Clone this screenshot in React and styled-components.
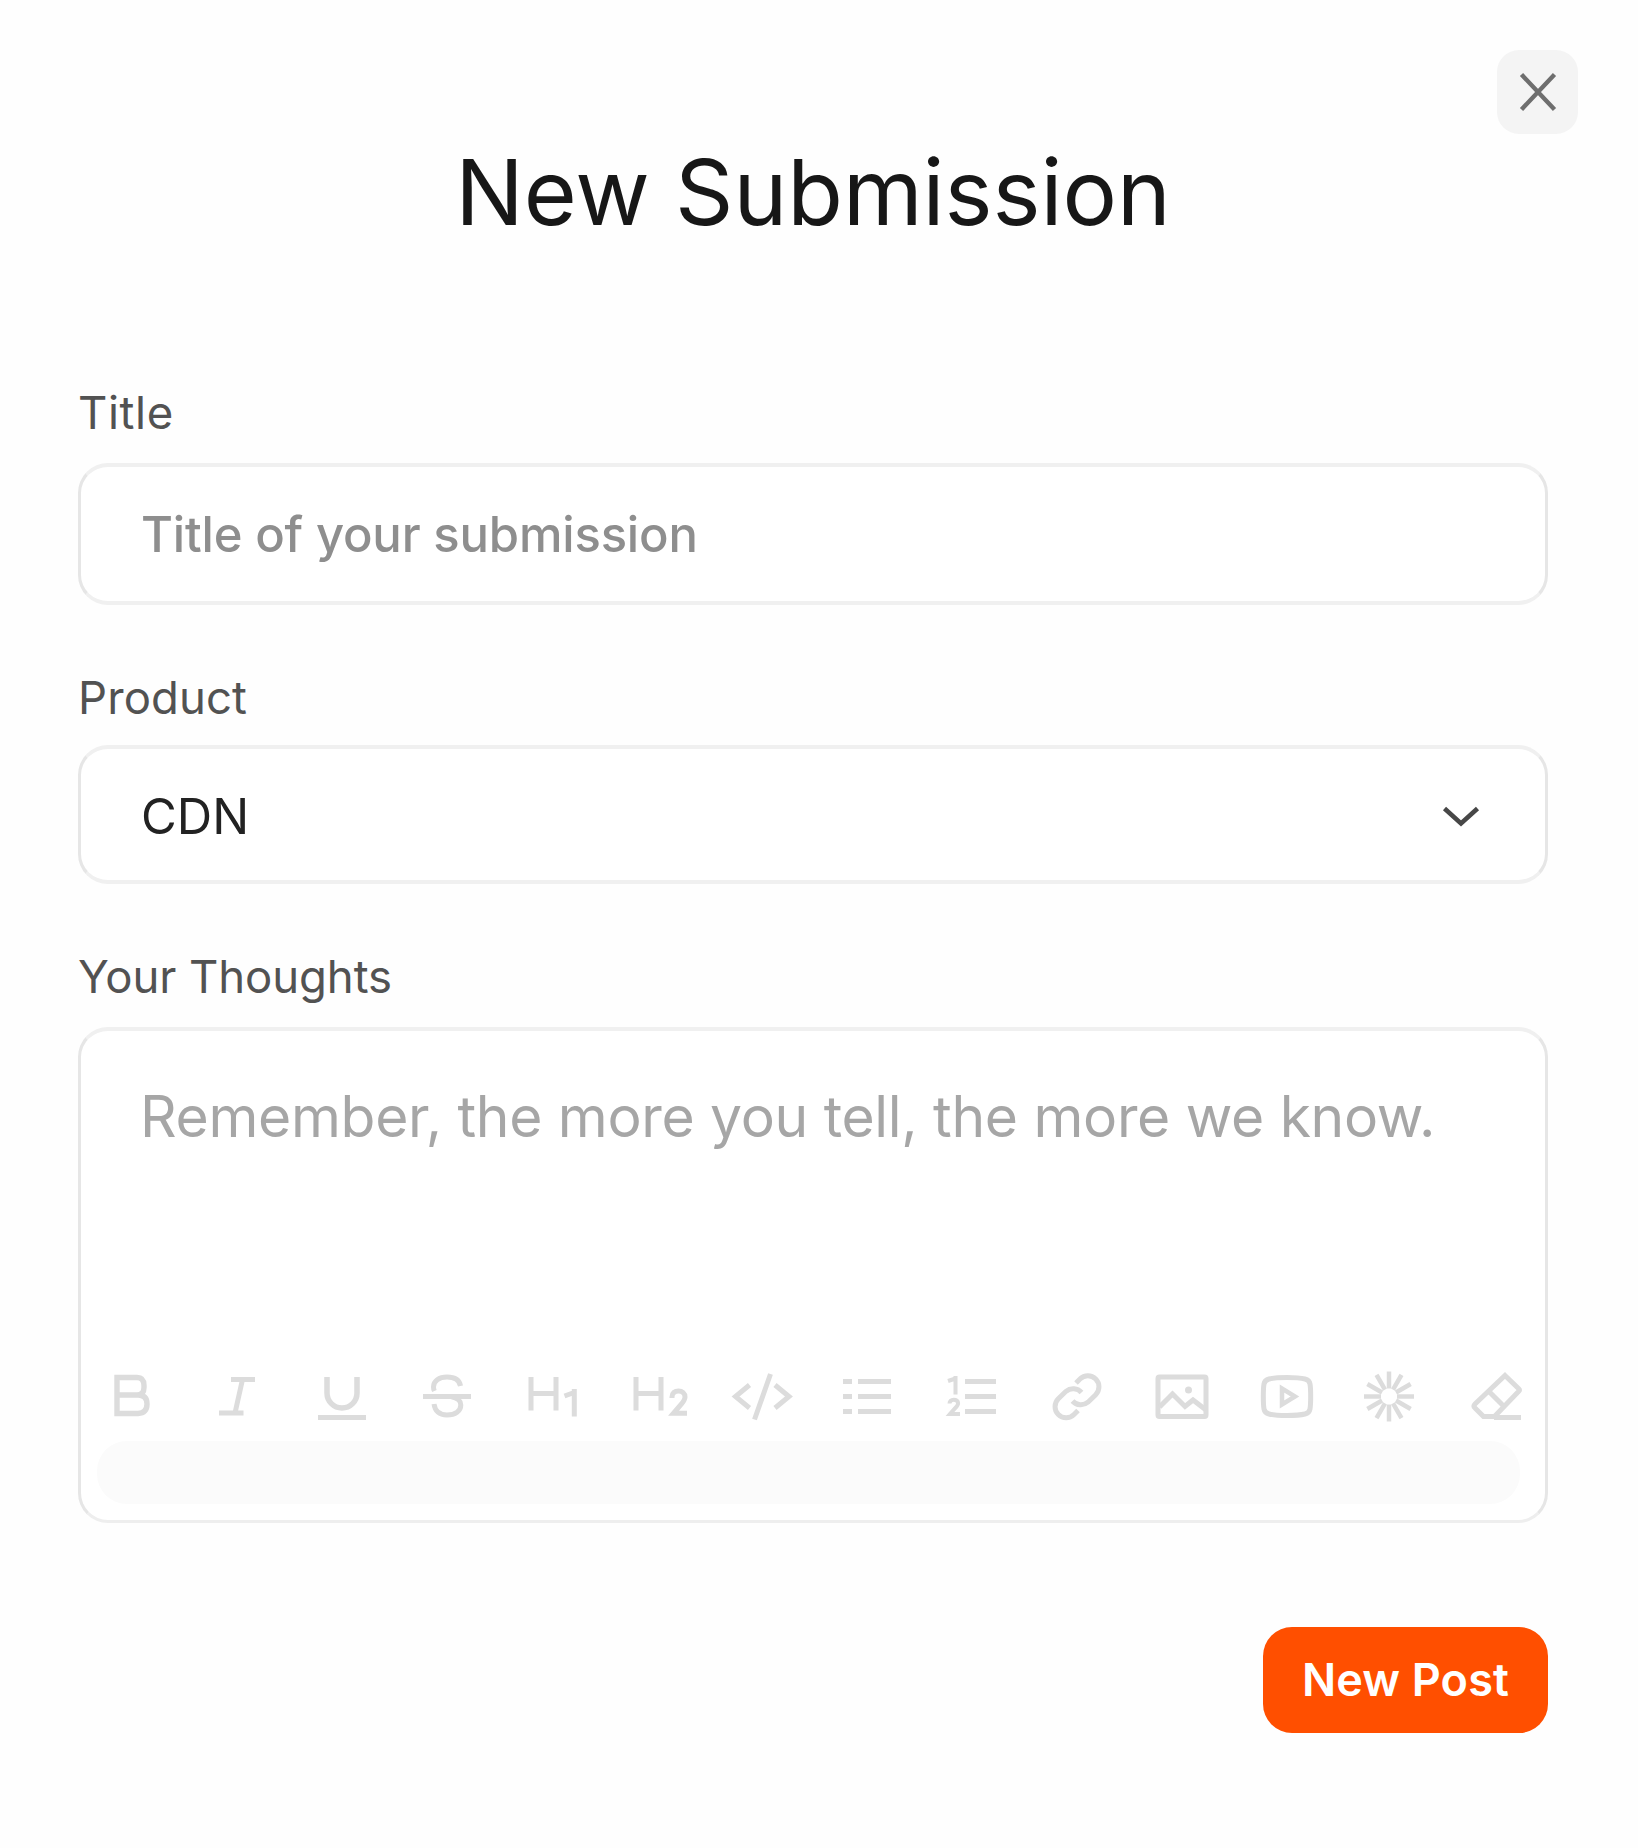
import React from 'react';
import styled, { createGlobalStyle } from 'styled-components';

const GlobalStyle = createGlobalStyle`
  *, *::before, *::after { box-sizing: border-box; }
  body { margin: 0; background: #fefefe; }
`;

const Dialog = styled.main`
  display: flex;
  flex-direction: column;
  width: 1638px;
  height: 1848px;
  padding: 50px 60px 0 78px;
  background: #fefefe;
  font-family: Inter, 'Liberation Sans', sans-serif;
`;

const CloseButton = styled.button`
  display: flex;
  align-items: center;
  justify-content: center;
  align-self: flex-end;
  width: 81px;
  height: 84px;
  padding: 0;
  border: 0;
  border-radius: 22px;
  background: #f4f4f4;
  color: #6e6e6e;
`;

const Form = styled.form`
  display: flex;
  flex-direction: column;
  width: 1470px;
  padding-top: 4px;
`;

const Heading = styled.h1`
  margin: 0 0 140px;
  color: #171717;
  font-size: 91px;
  font-weight: 400;
  line-height: 108px;
  letter-spacing: -0.05px;
  text-align: center;
`;

const Field = styled.div`
  display: flex;
  flex-direction: column;
  gap: ${({ $gap }) => $gap || 23}px;
  margin-bottom: 66px;
`;

const Label = styled.span`
  color: #525252;
  font-size: 45.5px;
  line-height: 54px;
  letter-spacing: ${({ $tracking }) => $tracking || 0}px;
`;

const Box = styled.div`
  display: flex;
  border-style: solid;
  border-width: 4px 3px;
  border-color: #f0f0f0 #e6e6e6;
  border-radius: 30px;
  background: #fff;
`;

const TextInput = styled(Box)`
  align-items: center;
  height: 142px;
  padding: 2px 0 0 60px;
`;

const Select = styled(Box)`
  align-items: center;
  justify-content: space-between;
  height: 139px;
  padding: 4px 66px 0 60px;
`;

const Value = styled.span`
  color: #222;
  font-size: 49px;
  line-height: 60px;
`;

const Placeholder = styled.span`
  color: #8e8e8e;
  font-size: 49px;
  font-weight: 500;
  line-height: 60px;
  letter-spacing: -0.18px;
`;

const Editor = styled(Box)`
  flex-direction: column;
  height: 496px;
  border-width: 4px 3px 3px;
  border-color: #f0f0f0 #e6e6e6 #eee;
`;

const Prompt = styled.span`
  flex: 1;
  padding: 51px 0 0 59px;
  color: #a6a6a6;
  font-size: 57px;
  line-height: 70px;
  letter-spacing: -0.32px;
  white-space: nowrap;
`;

const Toolbar = styled.div`
  display: flex;
  gap: 45px;
  padding-left: 21px;
  color: #dcdcdc;
`;

const Glyph = styled.svg`
  flex: none;
  display: block;
  width: ${({ $w }) => $w || 60}px;
  height: ${({ $h }) => $h || 60}px;
  overflow: visible;
  fill: none;
  stroke: currentColor;
  stroke-width: ${({ $stroke }) => $stroke || 5}px;
`;

const StatusBar = styled.div`
  width: 1423px;
  height: 63px;
  margin: 15px 0 16px 16px;
  border-radius: 30px;
  background: #fbfbfb;
`;

const SubmitButton = styled.button`
  align-self: flex-end;
  width: 285px;
  height: 106px;
  margin-top: 38px;
  padding: 0 0 2px;
  border: 0;
  border-radius: 29px;
  background: #ff4f00;
  color: #fff;
  font-family: inherit;
  font-size: 45px;
  font-weight: 600;
  letter-spacing: 0.15px;
`;

const spokes = Array.from({ length: 12 }, (_, i) => i * 30);

const tools = [
  ['Bold', <path strokeWidth="5.400" d="M15 11.500h20q7 0 7 8v2q0 7.500-7 7.500H15zM15 29h21q9 0 9 9t-9 9.500H15V11" />],
  ['Italic', <path d="M24 13.500h24M12 47h24.500M35.500 13.500L28 47" />],
  ['Underline', <><path strokeWidth="5.500" d="M15 11v16a15 15 0 0 0 30 0V11" /><path d="M6 51.500h48" /></>],
  ['Strikethrough', <path d="M6 30.500h48M43.500 20c-1-6-6-9-13.500-9-8 0-13.500 4-13.500 10 0 1.500.4 3 .9 4M17 38c1 7 5.500 11 13 11 8.500 0 13.800-4 13.800-10 0-5-3.300-7-9.800-8.500" />],
  ['Heading 1', <><path d="M9 11v33.500M34 11v33.500M9 27.500h25" /><path d="M42.500 30l9.700-3.500M52.300 23v27.500" /></>],
  ['Heading 2', <><path d="M9 11v33.500M34 11v33.500M9 27.500h25" /><path d="M45 32v-1c0-4 2.800-6 6.500-6s6.500 2.200 6.500 6c0 2.500-1.500 4.500-3.500 7L46.500 47.300H60" /></>],
  ['Code', <path d="M17.500 19L3.500 30.500l14 11.500M38.500 8L22.500 53.500M43 19l14 11.500L43 42" />],
  ['Bulleted list', <path d="M6 15.500h9M6 30.500h9M6 45.500h9M21 15.500h33M21 30.500h33M21 45.500h33" />],
  ['Numbered list', <><path d="M23 15.500h31M23 30.500h31M23 45.500h31" /><path strokeWidth="4" d="M6 15l7.500-2.500M13.500 10v18.500M7.500 37.500c0-2.300 1.700-3.800 4.200-3.800s4.400 1.400 4.400 3.600c0 2-1.300 3.300-3 4.900L8 48h10" /></>],
  ['Link', <path d="M29 17l4-4a11.100 11.100 0 0 1 15.700 15.700l-7.700 7.500a11.100 11.100 0 0 1-15.500-1.200M31 44.500l-4 4A11.100 11.100 0 0 1 11.300 32.800l7.700-7.500a11.100 11.100 0 0 1 15.500 1.200" />],
  ['Image', <><rect x="6" y="11" width="48" height="39.500" rx="1.500" /><path d="M7.500 41l13-13L33 40.500l8-6.500 13 10" /><circle cx="36.500" cy="24" r="3.500" fill="currentColor" stroke="none" /></>],
  ['Video', <><path d="M30 11.500c8 0 14 .5 18 1.500 3 .8 4.500 2 5 5 .9 5 .9 20 0 25-.5 3-2 4.200-5 5-8 2-28 2-36 0-3-.8-4.500-2-5-5-.9-5-.9-20 0-25 .5-3 2-4.200 5-5 4-1 10-1.500 18-1.500z" /><path strokeWidth="4.500" d="M25 22.500v16L38 30.500z" /></>],
  ['Effects', <g strokeWidth="4.500">{spokes.map((a) => <path key={a} transform={`rotate(${a} 27 30.500)`} d="M27 5.500v17" />)}</g>],
  ['Clear formatting', <path d="M38 9.500L52 23q1 1 0 2L27.500 50.500H16.500L8 42q-2-2 0-4zM21.500 25L36.500 40M27 51.500h27" />],
];

export default function App() {
  return (
    <>
      <GlobalStyle />
      <Dialog>
        <CloseButton type="button" aria-label="Close">
          <Glyph $w={36} $h={36} $stroke={4.4} viewBox="0 0 36 36">
            <path d="M1.500 .500l33 35M34.500 .500L1.500 35.500" />
          </Glyph>
        </CloseButton>
        <Form>
          <Heading>New Submission</Heading>
          <Field>
            <Label $tracking={0.6}>Title</Label>
            <TextInput>
              <Placeholder>Title of your submission</Placeholder>
            </TextInput>
          </Field>
          <Field $gap={20}>
            <Label $tracking={0.1}>Product</Label>
            <Select>
              <Value>CDN</Value>
              <Glyph $w={36} $h={20} $stroke={4.6} viewBox="0 0 36 20" color="#474747">
                <path d="M1.500 1.500L18 16.500l16.500-15" />
              </Glyph>
            </Select>
          </Field>
          <Field>
            <Label $tracking={-0.1}>Your Thoughts</Label>
            <Editor>
              <Prompt>Remember, the more you tell, the more we know.</Prompt>
              <Toolbar>
                {tools.map(([name, drawing]) => (
                  <Glyph key={name} viewBox="0 0 60 60" role="img" aria-label={name}>{drawing}</Glyph>
                ))}
              </Toolbar>
              <StatusBar />
            </Editor>
          </Field>
          <SubmitButton type="button">New Post</SubmitButton>
        </Form>
      </Dialog>
    </>
  );
}
